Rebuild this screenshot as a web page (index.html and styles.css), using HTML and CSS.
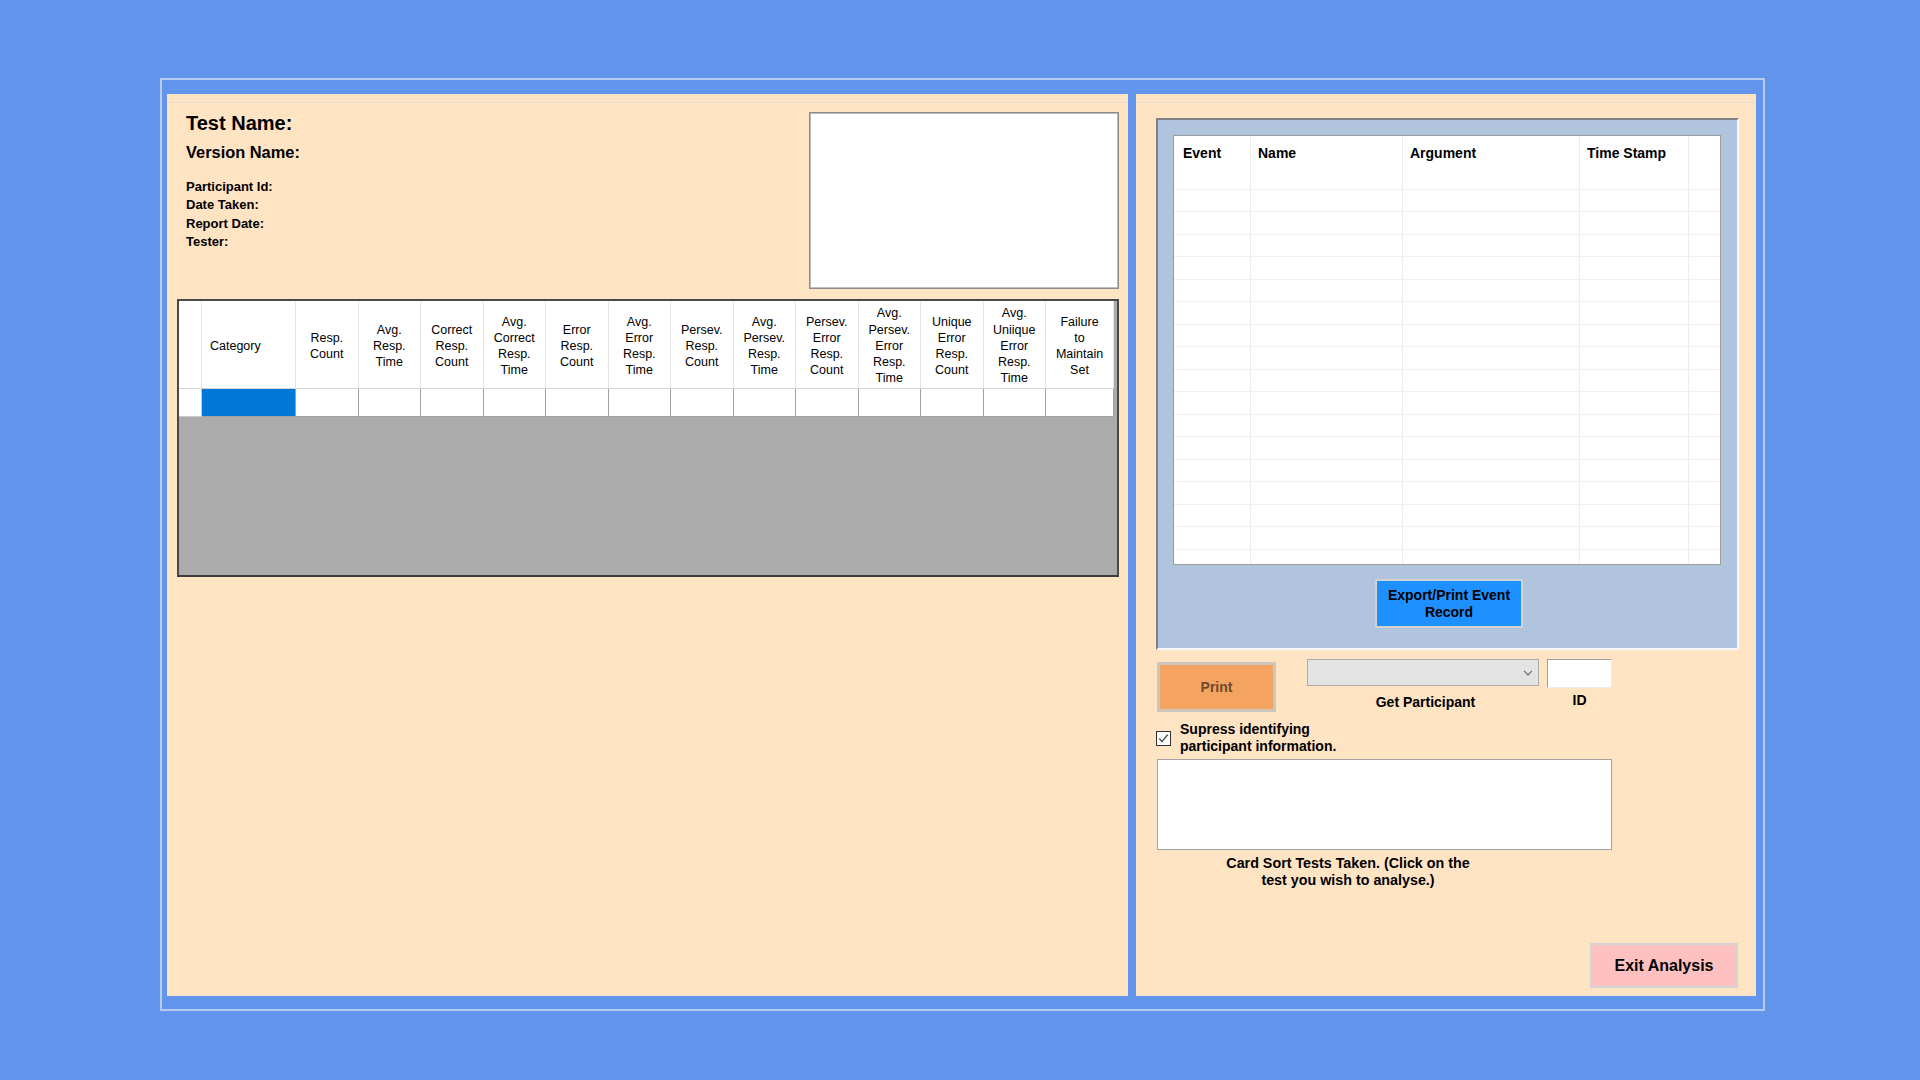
FILE: index.html
```html
<!DOCTYPE html>
<html lang="en">
<head>
<meta charset="utf-8">
<title>Card Sort Analysis</title>
<link rel="stylesheet" href="styles.css">
</head>
<body>
<div class="frame">
  <section class="panel panel-left">
    <div class="panel-inner">
      <div class="top">
        <div class="info">
          <div class="test-name">Test Name:</div>
          <div class="version-name">Version Name:</div>
          <div class="details">
            <div>Participant Id:</div>
            <div>Date Taken:</div>
            <div>Report Date:</div>
            <div>Tester:</div>
          </div>
        </div>
        <div class="notes-box"></div>
      </div>
      <div class="dg">
        <div class="dg-table">
          <div class="dg-h"></div>
          <div class="dg-h dg-left">Category</div>
          <div class="dg-h">Resp.<br>Count</div>
          <div class="dg-h">Avg.<br>Resp.<br>Time</div>
          <div class="dg-h">Correct<br>Resp.<br>Count</div>
          <div class="dg-h">Avg.<br>Correct<br>Resp.<br>Time</div>
          <div class="dg-h">Error<br>Resp.<br>Count</div>
          <div class="dg-h">Avg.<br>Error<br>Resp.<br>Time</div>
          <div class="dg-h">Persev.<br>Resp.<br>Count</div>
          <div class="dg-h">Avg.<br>Persev.<br>Resp.<br>Time</div>
          <div class="dg-h">Persev.<br>Error<br>Resp.<br>Count</div>
          <div class="dg-h">Avg.<br>Persev.<br>Error<br>Resp.<br>Time</div>
          <div class="dg-h">Unique<br>Error<br>Resp.<br>Count</div>
          <div class="dg-h">Avg.<br>Uniique<br>Error<br>Resp.<br>Time</div>
          <div class="dg-h">Failure<br>to<br>Maintain<br>Set</div>

          <div class="dg-c dg-rowhead"></div>
          <div class="dg-c dg-sel"></div>
          <div class="dg-c"></div><div class="dg-c"></div><div class="dg-c"></div><div class="dg-c"></div>
          <div class="dg-c"></div><div class="dg-c"></div><div class="dg-c"></div><div class="dg-c"></div>
          <div class="dg-c"></div><div class="dg-c"></div><div class="dg-c"></div><div class="dg-c"></div>
          <div class="dg-c"></div>
        </div>
      </div>
    </div>
  </section>

  <section class="panel panel-right">
    <div class="panel-inner">
      <div class="groupbox">
        <div class="evt-grid">
          <div class="evt-head">
            <div class="ec c1">Event</div><div class="ec c2">Name</div><div class="ec c3">Argument</div><div class="ec c4">Time Stamp</div><div class="ec c5"></div>
          </div>
          <div class="evt-body">
            <div class="evt-row"><div class="ec c1"></div><div class="ec c2"></div><div class="ec c3"></div><div class="ec c4"></div><div class="ec c5"></div></div>
            <div class="evt-row"><div class="ec c1"></div><div class="ec c2"></div><div class="ec c3"></div><div class="ec c4"></div><div class="ec c5"></div></div>
            <div class="evt-row"><div class="ec c1"></div><div class="ec c2"></div><div class="ec c3"></div><div class="ec c4"></div><div class="ec c5"></div></div>
            <div class="evt-row"><div class="ec c1"></div><div class="ec c2"></div><div class="ec c3"></div><div class="ec c4"></div><div class="ec c5"></div></div>
            <div class="evt-row"><div class="ec c1"></div><div class="ec c2"></div><div class="ec c3"></div><div class="ec c4"></div><div class="ec c5"></div></div>
            <div class="evt-row"><div class="ec c1"></div><div class="ec c2"></div><div class="ec c3"></div><div class="ec c4"></div><div class="ec c5"></div></div>
            <div class="evt-row"><div class="ec c1"></div><div class="ec c2"></div><div class="ec c3"></div><div class="ec c4"></div><div class="ec c5"></div></div>
            <div class="evt-row"><div class="ec c1"></div><div class="ec c2"></div><div class="ec c3"></div><div class="ec c4"></div><div class="ec c5"></div></div>
            <div class="evt-row"><div class="ec c1"></div><div class="ec c2"></div><div class="ec c3"></div><div class="ec c4"></div><div class="ec c5"></div></div>
            <div class="evt-row"><div class="ec c1"></div><div class="ec c2"></div><div class="ec c3"></div><div class="ec c4"></div><div class="ec c5"></div></div>
            <div class="evt-row"><div class="ec c1"></div><div class="ec c2"></div><div class="ec c3"></div><div class="ec c4"></div><div class="ec c5"></div></div>
            <div class="evt-row"><div class="ec c1"></div><div class="ec c2"></div><div class="ec c3"></div><div class="ec c4"></div><div class="ec c5"></div></div>
            <div class="evt-row"><div class="ec c1"></div><div class="ec c2"></div><div class="ec c3"></div><div class="ec c4"></div><div class="ec c5"></div></div>
            <div class="evt-row"><div class="ec c1"></div><div class="ec c2"></div><div class="ec c3"></div><div class="ec c4"></div><div class="ec c5"></div></div>
            <div class="evt-row"><div class="ec c1"></div><div class="ec c2"></div><div class="ec c3"></div><div class="ec c4"></div><div class="ec c5"></div></div>
            <div class="evt-row"><div class="ec c1"></div><div class="ec c2"></div><div class="ec c3"></div><div class="ec c4"></div><div class="ec c5"></div></div>
            <div class="evt-row"><div class="ec c1"></div><div class="ec c2"></div><div class="ec c3"></div><div class="ec c4"></div><div class="ec c5"></div></div>
            <div class="evt-row"><div class="ec c1"></div><div class="ec c2"></div><div class="ec c3"></div><div class="ec c4"></div><div class="ec c5"></div></div>
          </div>
        </div>
        <button class="btn btn-export">Export/Print Event<br>Record</button>
      </div>

      <div class="participant-row">
        <button class="btn btn-print">Print</button>
        <div class="combo-col">
          <div class="combo">
            <svg width="10" height="6" viewBox="0 0 10 6"><path d="M1 0.8 L5 4.8 L9 0.8" fill="none" stroke="#6a6a6a" stroke-width="1.2"/></svg>
          </div>
          <div class="lbl lbl-combo">Get Participant</div>
        </div>
        <div class="id-col">
          <div class="id-box"></div>
          <div class="lbl lbl-id">ID</div>
        </div>
      </div>

      <label class="check-row">
        <span class="checkbox"><svg width="13" height="13" viewBox="0 0 13 13"><path d="M2.3 6.6 L5 9.6 L10.7 2.6" fill="none" stroke="#3a3a3a" stroke-width="1.3"/></svg></span>
        <span class="check-label">Supress identifying<br>participant information.</span>
      </label>

      <div class="listbox"></div>
      <div class="caption">Card Sort Tests Taken. (Click on the<br>test you wish to analyse.)</div>

      <button class="btn btn-exit">Exit Analysis</button>
    </div>
  </section>
</div>
</body>
</html>
```
FILE: styles.css
```css
* { box-sizing: border-box; }
html, body { margin: 0; padding: 0; }
body {
  width: 1920px;
  height: 1080px;
  overflow: hidden;
  background: #6495ed;
  font-family: "Liberation Sans", Arial, sans-serif;
  color: #000;
}

.frame {
  margin: 78px 0 0 160px;
  width: 1605px;
  height: 933px;
  border: 2px solid #b7cbf3;
  padding: 14px 7px 13px 5px;
  display: flex;
  gap: 8px;
}

.panel {
  background: #ffe4c4;
  padding-top: 8px;
  display: flex;
  flex-direction: column;
  height: 902px;
}
.panel-left { width: 961px; }
.panel-right { width: 620px; }

.panel-inner {
  flex: 1;
  border-top: 1px solid #e4dbd1;
  border-bottom: 1px solid #efe2d3;
  display: flex;
  flex-direction: column;
}

/* ---------- left panel ---------- */
.top { display: flex; padding-top: 9px; }
.info { flex: 1; padding-left: 19px; }
.test-name { font-size: 20px; font-weight: bold; line-height: 22px; }
.version-name { font-size: 16.4px; font-weight: bold; line-height: 20px; margin-top: 8px; }
.details { margin-top: 16px; font-size: 13px; font-weight: bold; line-height: 18.4px; }

.notes-box {
  width: 310px;
  height: 177px;
  margin-right: 9px;
  background: #fff;
  border: 1px solid #8a8a8a;
  box-shadow: inset 0 0 0 1px #bdbdbd;
}

.dg {
  margin: 10px 9px 0 10px;
  height: 278px;
  border: 2px solid #4a4a4a;
  border-bottom-color: #3a3a3a;
  background: #ababab;
  overflow: hidden;
}
.dg-table {
  display: grid;
  grid-template-columns: 23px 94px repeat(12, 62.5px) 68px;
  grid-template-rows: 88px 28px;
  width: max-content;
}
.dg-h {
  background: #fff;
  border-right: 1px solid #e4e4e4;
  border-bottom: 1px solid #d4d4d4;
  font-size: 12.5px;
  line-height: 16.2px;
  text-align: center;
  padding-top: 3px;
  display: flex;
  align-items: center;
  justify-content: center;
}
.dg-h.dg-left { justify-content: flex-start; padding-left: 8px; }
.dg-c {
  background: #fff;
  border-right: 1px solid #a0a0a0;
  border-bottom: 1px solid #a0a0a0;
}
.dg-c.dg-rowhead { border-right-color: #c8c8c8; border-bottom-color: #c8c8c8; }
.dg-c.dg-sel { background: #0078d7; }

/* ---------- right panel ---------- */
.groupbox {
  margin: 15px 17px 0 20px;
  height: 532px;
  border: 2px solid;
  border-color: #808080 #f7f7f7 #f7f7f7 #808080;
  background: #b0c4de;
  padding: 15px 0 0 15px;
}
.evt-grid {
  width: 548px;
  height: 430px;
  border: 1px solid #9c9c9c;
  background: #fff;
  overflow: hidden;
}
.evt-head { display: flex; height: 31px; }
.evt-body { height: 397px; overflow: hidden; }
.evt-row { display: flex; height: 22.5px; border-bottom: 1px solid #efefef; }
.ec { flex: none; border-right: 1px solid #ededed; }
.c1 { width: 77px; }
.c2 { width: 152px; }
.c3 { width: 177px; }
.c4 { width: 109px; }
.c5 { flex: 1; border-right: 0; }
.evt-head .ec {
  font-size: 14px;
  font-weight: bold;
  line-height: 16px;
  padding: 9px 0 0 7px;
  white-space: nowrap;
}
.evt-head .c1 { padding-left: 9px; }

.btn {
  font-family: inherit;
  font-weight: bold;
  font-size: 14px;
  color: #000;
  padding: 0;
  cursor: default;
}
.btn-export {
  display: block;
  margin: 14px 0 0 202px;
  width: 148px;
  height: 49px;
  background: #1e90ff;
  border: 2px solid #d2d2d2;
  line-height: 17px;
}

.participant-row { display: flex; align-items: flex-start; margin-top: 9px; }
.btn-print {
  margin: 3px 0 0 21px;
  width: 119px;
  height: 50px;
  background: #f4a460;
  border: 3px solid #cdc6be;
  color: #6f4a2a;
}
.combo-col { margin-left: 31px; width: 232px; }
.combo {
  height: 27px;
  background: #e3e3e3;
  border: 1px solid #acacac;
  display: flex;
  align-items: center;
  justify-content: flex-end;
  padding-right: 5px;
}
.lbl { font-size: 14px; font-weight: bold; text-align: center; line-height: 17px; }
.lbl-combo { margin-top: 8px; padding-left: 5px; }
.id-col { margin-left: 8px; width: 65px; }
.id-box {
  height: 29px;
  background: #fff;
  border: 1px solid;
  border-color: #a0a0a0 #ececec #ececec #a0a0a0;
}
.lbl-id { margin-top: 4px; }

.check-row { display: flex; align-items: flex-start; margin-top: 9px; }
.checkbox {
  margin: 10px 0 0 20px;
  width: 15px;
  height: 15px;
  border: 1px solid #333;
  background: #fbfbfb;
  display: flex;
  align-items: center;
  justify-content: center;
  flex: none;
}
.check-label { margin-left: 9px; font-size: 14px; font-weight: bold; line-height: 17.4px; }

.listbox {
  margin: 3px 0 0 21px;
  width: 455px;
  height: 91px;
  background: #fff;
  border: 1px solid #a2a2a2;
}
.caption {
  margin: 5px 0 0 62px;
  width: 300px;
  font-size: 14.3px;
  font-weight: bold;
  line-height: 17px;
  text-align: center;
}

.btn-exit {
  margin: auto 18px 7px auto;
  width: 148px;
  height: 45px;
  background: #ffc0c0;
  border: 2px solid #d4d4d4;
  font-size: 16px;
}
```
